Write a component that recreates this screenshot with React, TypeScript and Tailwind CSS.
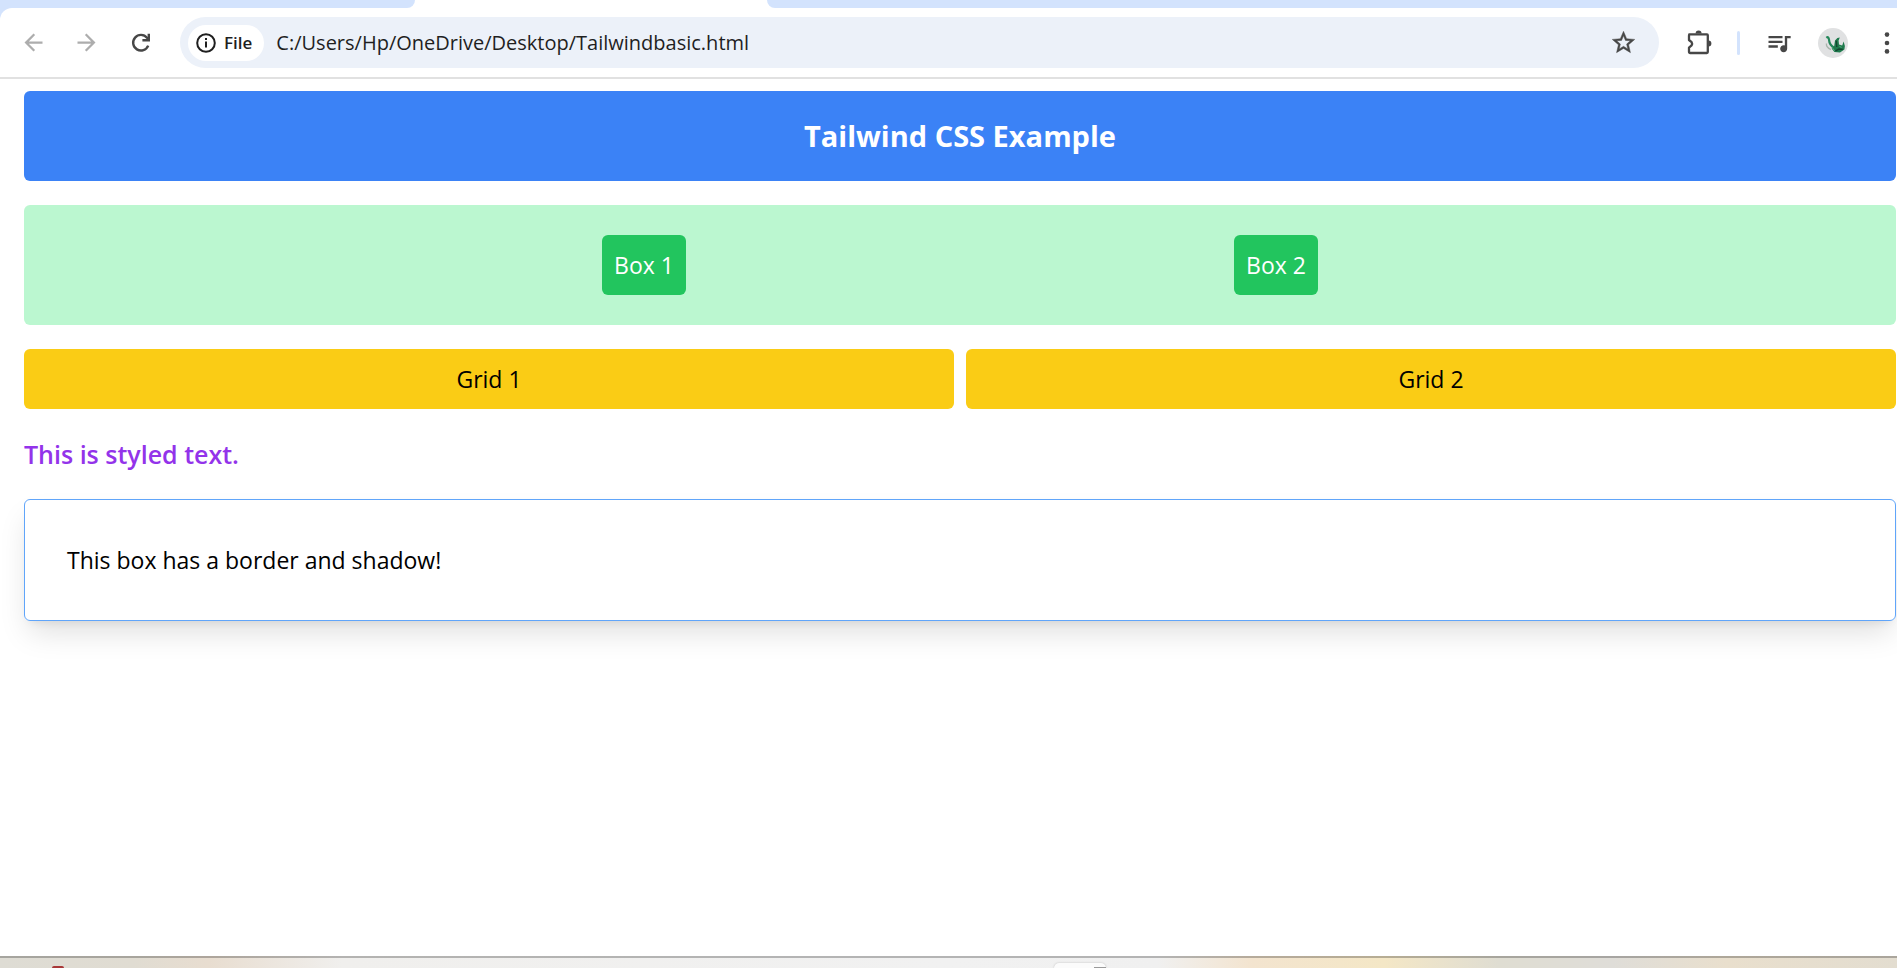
import type { ReactNode } from "react";
import { MdArrowBack, MdArrowForward, MdQueueMusic } from "react-icons/md";

function ReloadIcon() {
  return (
    <svg width="20" height="20" viewBox="0 0 20 20" fill="none" stroke="currentColor" strokeWidth="2.4">
      <path d="M17.2 12.6 A7.8 7.8 0 1 1 16 4.8 L17.8 7" />
      <path d="M17.8 0.8 V7.2 H11.4" />
    </svg>
  );
}

function InfoIcon() {
  return (
    <svg width="20" height="20" viewBox="0 0 20 20" fill="none" stroke="currentColor" strokeWidth="2">
      <circle cx="10" cy="10" r="8.8" />
      <path d="M10 8.6 V14.6" />
      <path d="M10 5 V7" />
    </svg>
  );
}

function StarIcon() {
  return (
    <svg width="27" height="27" viewBox="0 0 24 24" fill="currentColor" stroke="currentColor" strokeWidth="0.4">
      <path d="M22 9.24l-7.19-.62L12 2 9.19 8.63 2 9.24l5.46 4.73L5.82 21 12 17.27 18.18 21l-1.63-7.03L22 9.24zM12 15.4l-3.76 2.27 1-4.28-3.32-2.88 4.38-.38L12 6.1l1.71 4.04 4.38.38-3.32 2.88 1 4.28L12 15.4z" />
    </svg>
  );
}

function PuzzleIcon() {
  return (
    <svg width="26" height="26" viewBox="0 0 26 26">
      <path
        d="M3.2 4.4 H21 Q21.8 4.4 21.8 5.2 V22 Q21.8 23 20.8 23 H4.2 Q3 23 3 21.8 V17.6 L5.6 15.4 Q6.6 13.8 5.6 12.2 L3 10 V5.4 Q3 4.4 4 4.4 Z"
        fill="none"
        stroke="currentColor"
        strokeWidth="2.3"
        strokeLinejoin="round"
      />
      <path d="M9.6 3.6 A3 3 0 0 1 15.6 3.6 Z M22.4 10.6 A3 3 0 0 1 22.4 16.6 Z" fill="currentColor" />
    </svg>
  );
}

function MenuDots() {
  return (
    <svg width="6" height="24" viewBox="0 0 6 24" fill="currentColor">
      <circle cx="3" cy="3.6" r="2.3" />
      <circle cx="3" cy="12" r="2.3" />
      <circle cx="3" cy="20.4" r="2.3" />
    </svg>
  );
}

function Avatar() {
  return (
    <svg width="30" height="30" viewBox="0 0 30 30">
      <circle cx="15" cy="15" r="15" fill="#e0e1e2" />
      <path d="M8.4 15.5 Q8 19.4 13 21.6" stroke="#a9b3ac" strokeWidth="1.3" fill="none" />
      <path d="M8.4 9.8 Q10.6 8 11 11.6 Q11.4 17 16 19.6" stroke="#23875a" strokeWidth="2.2" fill="none" />
      <path d="M16.2 18 L17 12.4 L19.4 10 L21.8 9.4 L20.6 12.6 L21 16.4 L24.2 17.4 L25.6 13.4 Q27.6 17.6 26.4 21.6 L22 24.6 L16.4 24 L13.6 20.6 Z" fill="#1f7a4d" />
      <path d="M18.2 12.8 L18.8 19 M17.4 22.8 L21 21 L24.8 21.4" stroke="#11472f" strokeWidth="1.4" fill="none" />
      <path d="M14 19.4 L16.6 22.8 M21.4 18.4 L23.6 19.4" stroke="#4fae7c" strokeWidth="1" />
    </svg>
  );
}

function IconButton({ label, className, children }: { label: string; className?: string; children: ReactNode }) {
  return (
    <button type="button" aria-label={label} className={`flex shrink-0 items-center justify-center ${className ?? ""}`}>
      {children}
    </button>
  );
}

function TabStrip() {
  return (
    <div className="flex h-2 bg-white">
      <div className="w-[415px] rounded-br-[12px] bg-[#d3e3fd]" />
      <div className="w-[352px]" />
      <div className="flex-1 rounded-bl-[12px] bg-[#d3e3fd]" />
    </div>
  );
}

function Toolbar() {
  return (
    <div className="bg-[#d3e3fd]">
      <div className="flex h-[71px] items-center rounded-tl-[12px] border-b-2 border-[#e1e1e1] bg-white pr-[7px] pl-5 text-[#474747]">
        <IconButton label="Back" className="text-[#adadad]">
          <MdArrowBack size={27} />
        </IconButton>
        <IconButton label="Forward" className="ml-[26px] text-[#adadad]">
          <MdArrowForward size={27} />
        </IconButton>
        <IconButton label="Reload" className="ml-[31px]">
          <ReloadIcon />
        </IconButton>
        <div className="ml-[29px] flex h-[51px] min-w-0 flex-1 items-center rounded-full bg-[#ecf1f9] pr-[22px] pl-2">
          <button
            type="button"
            className="flex h-9 shrink-0 items-center gap-2 rounded-full bg-white pr-3 pl-2 text-[17px] font-semibold text-[#1f1f1f]"
          >
            <InfoIcon />
            File
          </button>
          <input
            aria-label="Address"
            defaultValue="C:/Users/Hp/OneDrive/Desktop/Tailwindbasic.html"
            className="ml-3 min-w-0 flex-1 bg-transparent text-[20px] text-[#1f1f1f] outline-none"
          />
          <IconButton label="Bookmark this page">
            <StarIcon />
          </IconButton>
        </div>
        <IconButton label="Extensions" className="ml-[27px]">
          <PuzzleIcon />
        </IconButton>
        <div className="ml-[25px] h-6 w-[3px] rounded-full bg-[#d3e3fd]" />
        <IconButton label="Media controls" className="ml-[25px]">
          <MdQueueMusic size={28} />
        </IconButton>
        <IconButton label="Profile" className="ml-[25px]">
          <Avatar />
        </IconButton>
        <IconButton label="Menu" className="ml-9">
          <MenuDots />
        </IconButton>
      </div>
    </div>
  );
}

function Taskbar() {
  return (
    <div className="flex h-3 items-end overflow-hidden border-t-2 border-black/25 bg-[linear-gradient(90deg,#dedcd4_0%,#e0dcd2_7%,#e8ddd0_11%,#f0efed_18%,#f1f1f1_50%,#f0f0f0_61%,#f3e4cf_66%,#f4e7c6_73%,#dfddd2_79%,#dfddd8_85%,#e9dfcd_91%,#e3ddd0_100%)] pl-[52px]">
      <div className="h-[2px] w-3 rounded-t-full bg-[#a83838]" />
      <div className="ml-[990px] flex h-[5px] w-[52px] items-end justify-end rounded-t-[5px] bg-[#fbfbfb] shadow-[0_0_2px_#bbbbbb]">
        <div className="h-px w-3 bg-[#9a9a9a]" />
      </div>
    </div>
  );
}

export default function App() {
  return (
    <div className="flex min-h-screen flex-col bg-white font-['Open_Sans','Noto_Sans',sans-serif] text-black">
      <TabStrip />
      <Toolbar />
      <main className="flex-1 pt-3 pr-px pl-6 text-[23px] leading-9">
        <h1 className="rounded-md bg-[#3b82f6] p-6 text-center text-[29px] leading-[42px] font-bold text-white">
          Tailwind CSS Example
        </h1>
        <div className="mt-6 flex justify-evenly rounded-md bg-[#bbf7d0] p-[30px] text-white">
          <div className="rounded-md bg-[#22c55e] p-3">Box 1</div>
          <div className="rounded-md bg-[#22c55e] p-3">Box 2</div>
        </div>
        <div className="mt-6 grid grid-cols-2 gap-3 text-center">
          <div className="rounded-md bg-[#facc15] p-3">Grid 1</div>
          <div className="rounded-md bg-[#facc15] p-3">Grid 2</div>
        </div>
        <p className="mt-6 text-[25px] leading-[42px] font-semibold text-[#9333ea]">This is styled text.</p>
        <div className="mt-6 rounded-md border border-[#60a5fa] p-[42px] shadow-[0_16px_30px_-5px_rgba(0,0,0,0.13),0_6px_9px_-6px_rgba(0,0,0,0.1)]">
          This box has a border and shadow!
        </div>
      </main>
      <Taskbar />
    </div>
  );
}
